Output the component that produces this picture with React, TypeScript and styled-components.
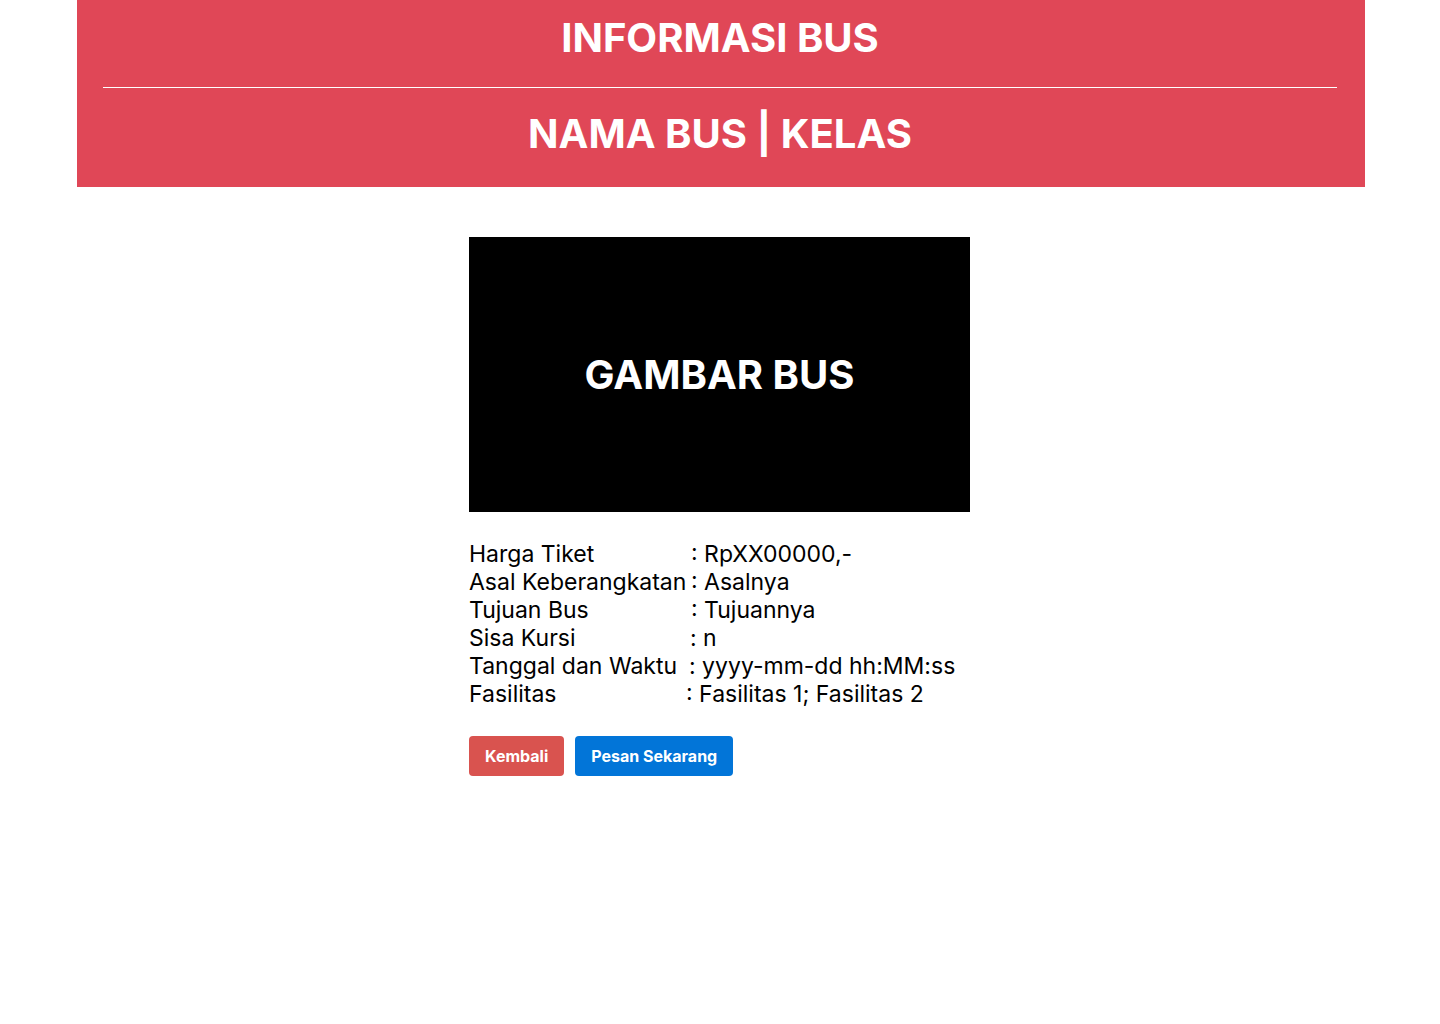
import styled, {createGlobalStyle} from 'styled-components';

const GlobalStyle = createGlobalStyle`
    * {
        box-sizing: border-box;
    }

    body {
        margin: 0;
        font-family: Inter, "Noto Sans", sans-serif;
        background: #ffffff;
        color: #000000;
    }
`

const rows = [
    {label: 'Harga Tiket', value: 'RpXX00000,-', shift: 0},
    {label: 'Asal Keberangkatan', value: 'Asalnya', shift: 0},
    {label: 'Tujuan Bus', value: 'Tujuannya', shift: 0},
    {label: 'Sisa Kursi', value: 'n', shift: -1},
    {label: 'Tanggal dan Waktu', value: 'yyyy-mm-dd hh:MM:ss', shift: -2},
    {label: 'Fasilitas', value: 'Fasilitas 1; Fasilitas 2', shift: -5},
];

export default function App() {
    return (
        <>
            <GlobalStyle/>
            <Header>
                <HeaderTitle>INFORMASI BUS</HeaderTitle>
                <Divider/>
                <BusName>NAMA BUS | KELAS</BusName>
            </Header>
            <Content>
                <Detail>
                    <Picture>GAMBAR BUS</Picture>
                    <InfoList>
                        {rows.map((row) => (
                            <InfoRow key={row.label}>
                                <Label>{row.label}</Label>
                                <Value $shift={row.shift}>: {row.value}</Value>
                            </InfoRow>
                        ))}
                    </InfoList>
                    <Actions>
                        <Button $variant="danger">Kembali</Button>
                        <Button $variant="primary">Pesan Sekarang</Button>
                    </Actions>
                </Detail>
            </Content>
        </>
    );
}

const Header = styled.header`
    width: 1288px;
    margin: 0 75px 0 77px;
    background-color: #e04757;
    color: #ffffff;
    padding: 16px 28px 0 26px;
    height: 187px;
    text-align: center;
`

const HeaderTitle = styled.h1`
    margin: 0;
    font-size: 40px;
    font-weight: 700;
    line-height: 44px;
`

const Divider = styled.hr`
    margin: 27px 0 0;
    border: none;
    border-top: 1px solid #ffffff;
`

const BusName = styled.h2`
    margin: 23px 0 0;
    font-size: 40px;
    font-weight: 700;
    line-height: 46px;
`

const Content = styled.main`
    display: flex;
    justify-content: center;
    padding-top: 50px;
`

const Detail = styled.section`
    width: 501px;
    margin-left: -1px;
`

const Picture = styled.div`
    height: 275px;
    background: #000000;
    color: #ffffff;
    display: flex;
    align-items: center;
    justify-content: center;
    font-size: 40px;
    font-weight: 700;
`

const InfoList = styled.div`
    margin-top: 28px;
    font-size: 23px;
    line-height: 28px;
`

const InfoRow = styled.div`
    display: flex;
    white-space: nowrap;
`

const Label = styled.span`
    width: 222px;
    flex-shrink: 0;
`

const Value = styled.span<{$shift: number}>`
    margin-left: ${(p) => p.$shift}px;
`

const Actions = styled.div`
    display: flex;
    gap: 11px;
    margin-top: 28px;
`

const Button = styled.button<{$variant: 'danger' | 'primary'}>`
    height: 40px;
    padding: 0 16px;
    border: none;
    border-radius: 4px;
    font-family: Inter, "Noto Sans", sans-serif;
    font-size: 16px;
    font-weight: 700;
    color: #ffffff;
    background-color: ${(p) => (p.$variant === 'danger' ? '#d9534f' : '#0275d8')};
    cursor: pointer;
`
